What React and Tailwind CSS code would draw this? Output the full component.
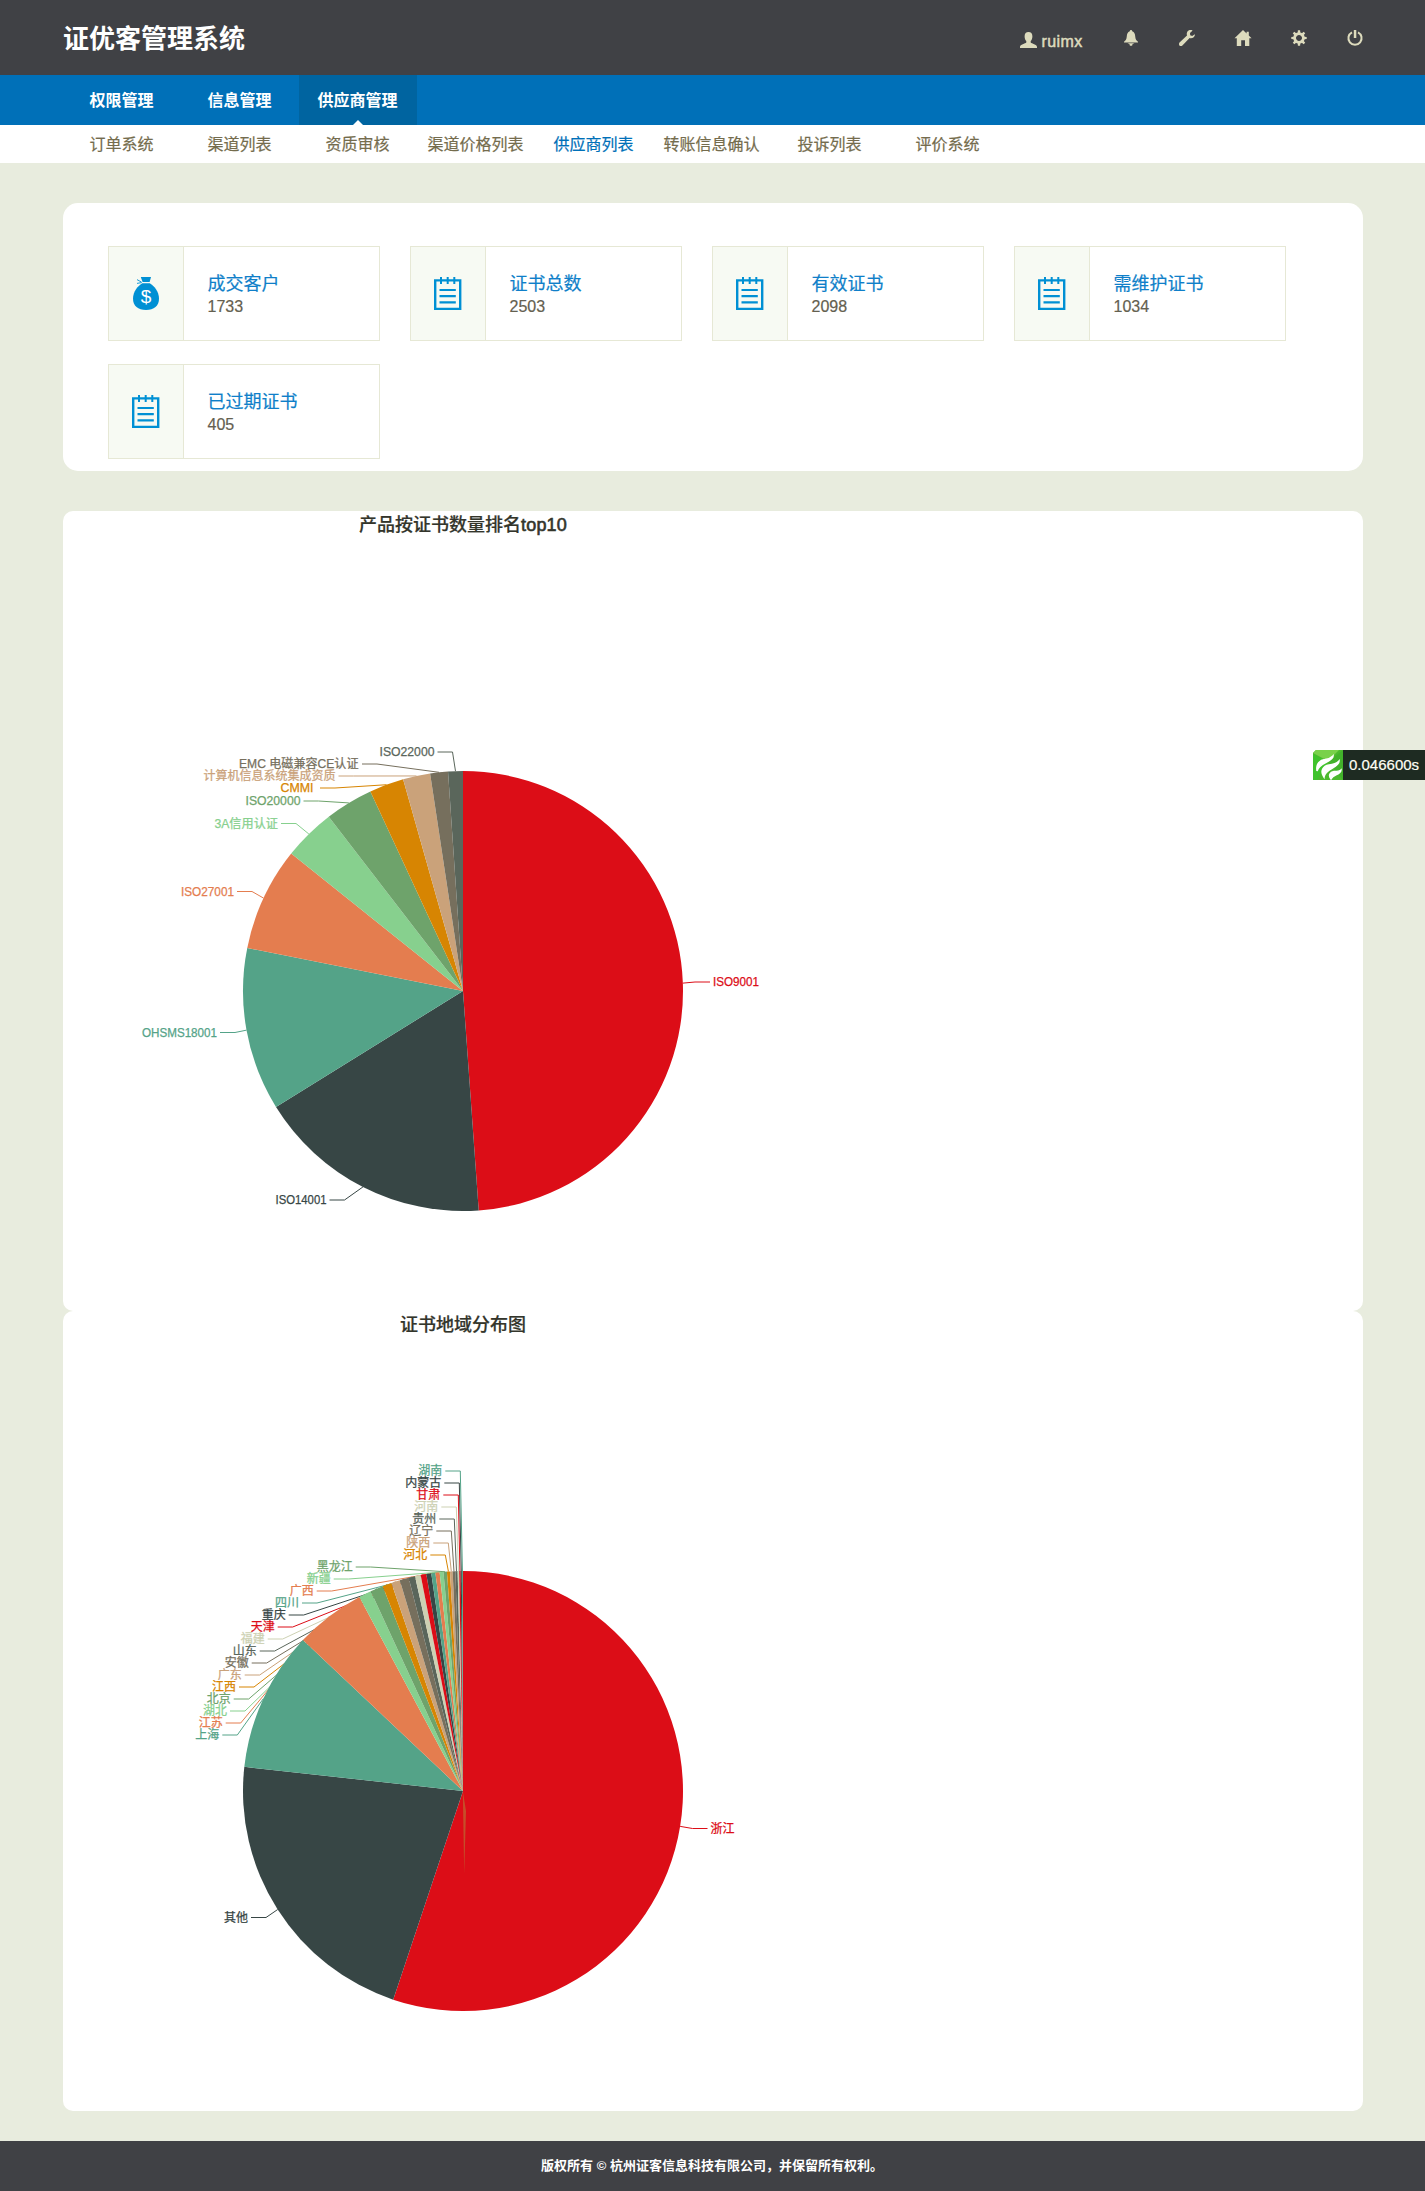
import React from "react";

const PALETTE = [
  "#dc0d17", "#374645", "#54a388", "#e47d4f", "#87d08e", "#6ea36b",
  "#d78502", "#caa27a", "#766f5d", "#5a665b", "#cdd1b3",
];

const SANS = "font-['Liberation_Sans','Noto_Sans_CJK_SC',sans-serif]";

const MAIN_NAV = ["权限管理", "信息管理", "供应商管理"];
const SUB_NAV = [
  "订单系统", "渠道列表", "资质审核", "渠道价格列表",
  "供应商列表", "转账信息确认", "投诉列表", "评价系统",
];

const STATS = [
  { label: "成交客户", value: "1733", icon: "bag" },
  { label: "证书总数", value: "2503", icon: "note" },
  { label: "有效证书", value: "2098", icon: "note" },
  { label: "需维护证书", value: "1034", icon: "note" },
  { label: "已过期证书", value: "405", icon: "note" },
];

// end: slice end angle in degrees clockwise from the top;
// knee / y: where the leader line bends, w: label width
const PRODUCTS = [
  { name: "ISO9001", end: 175.9, knee: 632, y: 471, w: 46 },
  { name: "ISO14001", end: 238.2, knee: 281.5, y: 689, w: 51 },
  { name: "OHSMS18001", end: 281.3, knee: 172, y: 521.5, w: 75 },
  { name: "ISO27001", end: 308.65, knee: 189, y: 380.5, w: 53 },
  { name: "3A信用认证", end: 322.4, knee: 233, y: 312.5, w: 63.5 },
  { name: "ISO20000", end: 335.1, knee: 255.5, y: 290, w: 55 },
  { name: "CMMI", end: 344.2, knee: 272, y: 277, w: 33, shift: -3.5 },
  { name: "计算机信息系统集成资质", end: 351.4, knee: 290.5, y: 265, w: 132 },
  { name: "EMC 电磁兼容CE认证", end: 356.1, knee: 314, y: 253, w: 119.5, shift: -0.5 },
  { name: "ISO22000", end: 360, knee: 389.5, y: 241, w: 55 },
];

const REGIONS = [
  { name: "浙江", end: 198.5, knee: 629.5, y: 517.5 },
  { name: "其他", end: 276.3, knee: 203, y: 606.5 },
  { name: "上海", end: 313.3, knee: 174.3, y: 424 },
  { name: "江苏", end: 331.9, knee: 177.7, y: 412 },
  { name: "湖北", end: 335.2, knee: 182, y: 400 },
  { name: "北京", end: 338.6, knee: 185.7, y: 388 },
  { name: "江西", end: 341, knee: 191, y: 376 },
  { name: "广东", end: 343.3, knee: 196.7, y: 364 },
  { name: "安徽", end: 345.7, knee: 203.7, y: 352 },
  { name: "山东", end: 347.4, knee: 211.7, y: 340 },
  { name: "福建", end: 348.9, knee: 219.7, y: 328 },
  { name: "天津", end: 350.4, knee: 229.7, y: 316 },
  { name: "重庆", end: 351.7, knee: 240.7, y: 304 },
  { name: "四川", end: 352.8, knee: 254, y: 292 },
  { name: "广西", end: 353.9, knee: 268.7, y: 280 },
  { name: "新疆", end: 354.9, knee: 285.7, y: 268 },
  { name: "黑龙江", end: 355.8, knee: 307.7, y: 256 },
  { name: "河北", end: 356.6, knee: 382.3, y: 244 },
  { name: "陕西", end: 357.3, knee: 385.3, y: 232 },
  { name: "辽宁", end: 358, knee: 388.3, y: 220 },
  { name: "贵州", end: 358.6, knee: 391.3, y: 208 },
  { name: "河南", end: 359, knee: 393.3, y: 196 },
  { name: "甘肃", end: 359.4, knee: 395.3, y: 184 },
  { name: "内蒙古", end: 359.7, knee: 396.3, y: 172 },
  { name: "湖南", end: 360, knee: 397.3, y: 160 },
];

const CX = 400;
const CY = 480;
const R = 220;

function onArc(deg) {
  const a = (deg * Math.PI) / 180;
  return [CX + R * Math.sin(a), CY - R * Math.cos(a)];
}

function PieChart({ title, suffix, data, tail }) {
  const slices = data.map((d, i) => {
    const start = i === 0 ? 0 : data[i - 1].end;
    const [x0, y0] = onArc(start);
    const [x1, y1] = onArc(d.end);
    const large = d.end - start > 180 ? 1 : 0;
    const [mx, my] = onArc((start + d.end) / 2);
    return {
      ...d,
      color: PALETTE[i % PALETTE.length],
      path: `M${CX} ${CY}L${x0} ${y0}A${R} ${R} 0 ${large} 1 ${x1} ${y1}Z`,
      mx,
      my,
      right: d.knee > CX,
    };
  });
  return (
    <section className="h-[800px] rounded-[10px] bg-white">
      <svg width="800" height="800" viewBox="0 0 800 800" className={`block ${SANS}`}>
        <text x="400" y="20" fontSize="18" fontWeight="500" fill="#33352b" stroke="#33352b" strokeWidth="0.2" textAnchor="middle">
          {title}
          {suffix && <tspan strokeWidth="0.6" letterSpacing="0.2">{suffix}</tspan>}
        </text>
        {slices.map((s) => (
          <polyline
            key={s.name}
            fill="none"
            stroke={s.color}
            points={`${s.mx},${s.my} ${s.knee},${s.y} ${s.right ? s.knee + 15 : s.knee - 15},${s.y}`}
          />
        ))}
        {slices.map((s) => (
          <path key={s.name} d={s.path} fill={s.color} />
        ))}
        {tail && <path d="M399.8 480L401.2 563L403 500Z" fill="#b87a35" opacity="0.6" />}
        {slices.map((s) => (
          <text
            key={s.name}
            x={(s.right ? s.knee + 18 : s.knee - 18) + (s.shift || 0)}
            y={s.y + 4.3}
            fontSize="12"
            fill={s.color}
            stroke={s.color}
            strokeWidth="0.25"
            textAnchor={s.right ? "start" : "end"}
            textLength={s.w || s.name.length * 12}
            lengthAdjust="spacingAndGlyphs"
          >
            {s.name}
          </text>
        ))}
      </svg>
    </section>
  );
}

function NoteIcon() {
  return (
    <svg width="28" height="33" viewBox="0 0 28 33" fill="none" stroke="#0090d4">
      <path d="M1.2 3.4H26.2V31.9H1.2Z" strokeWidth="2.4" />
      <path d="M7 0V7M13.7 0V7M20.3 0V7" strokeWidth="2" />
      <path d="M5.5 13H21.8M5.5 19.2H21.8M5.5 25.4H21.8" strokeWidth="2.2" />
    </svg>
  );
}

function BagIcon() {
  return (
    <svg width="26" height="33" viewBox="0 0 26 33" fill="#0090d4">
      <path d="M7.8 0H18L16.6 5H9.6Z" />
      <path d="M9.3 6.2H16.8C21.5 9 26 15 26 21.5C26 29 21 33 13 33S0 29 0 21.5C0 15 4.5 9 9.3 6.2Z" />
      <path d="M4 2.6L8.6 5.2M4 6.4L8.6 5.6" stroke="#0090d4" strokeWidth="0.9" />
      <text x="13" y="26.3" fontSize="19" fill="#fff" textAnchor="middle">$</text>
    </svg>
  );
}

function StatCard({ label, value, icon }) {
  return (
    <div className="flex h-[95px] w-[272px] border border-[#e6e8d5]">
      <div className="flex w-[75px] items-center justify-center border-r border-[#e6e8d5] bg-[#f7faf3]">
        {icon === "bag" ? <BagIcon /> : <NoteIcon />}
      </div>
      <div className="flex flex-col pl-6 pt-[26px]">
        <span className="text-[18px] leading-[23px] text-[#0f7fc9] [-webkit-text-stroke:0.2px_#0f7fc9]">{label}</span>
        <span className="text-[16px] leading-[21px] text-[#646050] [-webkit-text-stroke:0.2px_#646050]">{value}</span>
      </div>
    </div>
  );
}

const ICONS = {
  bell: (
    <>
      <path d="M8 0C7.2 0 6.8.6 6.8 1.3C4.6 2 4 4 3.8 6.2C3.6 9 2.6 10.6 1 11.8V12.4H15V11.8C13.4 10.6 12.4 9 12.2 6.2C12 4 11.4 2 9.2 1.3C9.2.6 8.8 0 8 0Z" />
      <path d="M4.5 13.2H11.5L9.4 14.2V15.2L8 16L6.6 15.2V14.2Z" />
    </>
  ),
  wrench: (
    <path d="M15.9 4.3L13.2 6L11.2 5.2L11 3L13.6.5C11.5-.4 9.2.2 8.2 2C7.6 3.2 7.7 4.4 8 5.4L.5 12.6C0 13.1 0 13.8.1 15L.9 15.9C2 16 2.8 16 3.4 15.4L10.6 8.1C12 8.6 13.6 8.3 14.7 7.2C15.6 6.3 16 5.2 15.9 4.3Z" />
  ),
  home: (
    <path d="M8 0L-.5 8.3H1.8V16H6.2V10.3H10V16H14.3V8.3H16.6L13.8 5.5V1.7H11.6V3.4Z" />
  ),
  power: (
    <>
      <path d="M5 2.3A6.6 6.6 0 1 0 11 2.3" fill="none" stroke="currentColor" strokeWidth="2" />
      <path d="M6.8 0H9.3V8H6.8Z" />
    </>
  ),
};

function Gear() {
  return (
    <svg width="16" height="16" viewBox="0 0 16 16" fill="currentColor">
      {[0, 45, 90, 135].map((a) => (
        <path key={a} transform={`rotate(${a} 8 8)`} d="M6.5 5L6.9.3H9.1L9.5 5ZM6.5 11L6.9 15.7H9.1L9.5 11Z" />
      ))}
      <circle cx="8" cy="8" r="4.4" fill="none" stroke="currentColor" strokeWidth="2.8" />
    </svg>
  );
}

function Glyph({ name }) {
  return (
    <svg width="16" height="16" viewBox="0 0 16 16" fill="currentColor" className="overflow-visible">
      {ICONS[name]}
    </svg>
  );
}

export default function App() {
  return (
    <div className={`min-h-[2191px] w-[1425px] bg-[#e8ecde] ${SANS}`}>
      <header className="flex h-[75px] justify-between bg-[#404145] pl-[63px] pr-[62.5px]">
        <h1 className="text-[26px] font-bold leading-[78px] text-white">证优客管理系统</h1>
        <div className="flex gap-10 pt-[30px] text-[#dddbbd]">
          <div className="flex h-5 gap-[5px] pt-[2px]">
            <svg width="17" height="16" viewBox="0 0 17 16" fill="currentColor">
              <path d="M8.5 0C6 0 4.6 1.5 4.6 4.2C4.6 6.4 5.2 8 6.3 9V10.6C5.4 11.8 0 12.4 0 15V16H17V15C17 12.4 11.6 11.8 10.7 10.6V9C11.8 8 12.4 6.4 12.4 4.2C12.4 1.5 11 0 8.5 0Z" />
            </svg>
            <span className="w-[41px] text-[16px] leading-[19px] tracking-[0.4px] [-webkit-text-stroke:0.5px_#dddbbd]">ruimx</span>
          </div>
          <Glyph name="bell" />
          <Glyph name="wrench" />
          <Glyph name="home" />
          <Gear />
          <Glyph name="power" />
        </div>
      </header>

      <nav className="flex h-[50px] bg-[#0070b8] pl-[63px] text-[16px] font-bold leading-[52px] text-white">
        {MAIN_NAV.map((t, i) => (
          <a key={t} className={i === 2 ? "relative h-[50px] w-[118px] bg-[#0064a0] pr-px text-center" : "w-[118px] pr-px text-center"}>
            {t}
            {i === 2 && (
              <span className="absolute bottom-0 left-[54px] border-x-[5px] border-b-[5px] border-x-transparent border-b-white" />
            )}
          </a>
        ))}
      </nav>
      <nav className="flex h-[38px] bg-white pl-[63px] text-[16px] leading-[40px]">
        {SUB_NAV.map((t, i) => (
          <a
            key={t}
            className={
              i === 4
                ? "w-[118px] pr-px text-center text-[#0070b8] [-webkit-text-stroke:0.2px_#0070b8]"
                : "w-[118px] pr-px text-center text-[#746c4d] [-webkit-text-stroke:0.2px_#746c4d]"
            }
          >
            {t}
          </a>
        ))}
      </nav>

      <main className="mx-auto mt-10 w-[1300px]">
        <section className="mb-10 flex h-[268px] flex-wrap content-start gap-x-[30px] gap-y-[23px] rounded-[15px] bg-white pl-[45px] pt-[43px]">
          {STATS.map((s) => (
            <StatCard key={s.label} {...s} />
          ))}
        </section>
        <PieChart title="产品按证书数量排名" suffix="top10" data={PRODUCTS} />
        <PieChart title="证书地域分布图" data={REGIONS} tail />
      </main>

      <footer className="mt-[30px] h-[50px] bg-[#404145] pr-px text-center text-[13px] font-bold leading-[50px] text-white">
        版权所有 © 杭州证客信息科技有限公司，并保留所有权利。
      </footer>

      <div className="fixed right-0 top-[750px] flex h-[30px] w-[112px]">
        <svg width="30" height="30" viewBox="0 0 30 30">
          <path d="M3 0H30V30H0V3Z" fill="#4cb92e" />
          <path d="M0 3L3 0H26L15 11Z" fill="#79d14a" />
          <path d="M0 4L15 12L4 30H0Z" fill="#3fc32c" />
          <path d="M30 0V30L15 12Z" fill="#42b22b" />
          <path d="M20 6C20 12 6 12 4 21C3 14 7 10 12 9.5C16 9 18 8 20 6Z" fill="#fff" stroke="#fff" strokeWidth="1.6" />
          <path d="M26 11C26 18 12 18 11 27C7 21 10 16 16 15C21 14.5 24 13 26 11Z" fill="#fff" stroke="#fff" strokeWidth="1.6" />
          <path d="M28 20C28 25 20 24 18 29C15 25 17 22 21 21.5C25 21.5 27 21 28 20Z" fill="#fff" stroke="#fff" strokeWidth="1.4" />
        </svg>
        <span className="w-[82px] bg-[#1e2b22] pl-[6px] text-[15px] leading-[30px] text-[#fffef4] [-webkit-text-stroke:0.2px_#fffef4]">0.046600s</span>
      </div>
    </div>
  );
}
